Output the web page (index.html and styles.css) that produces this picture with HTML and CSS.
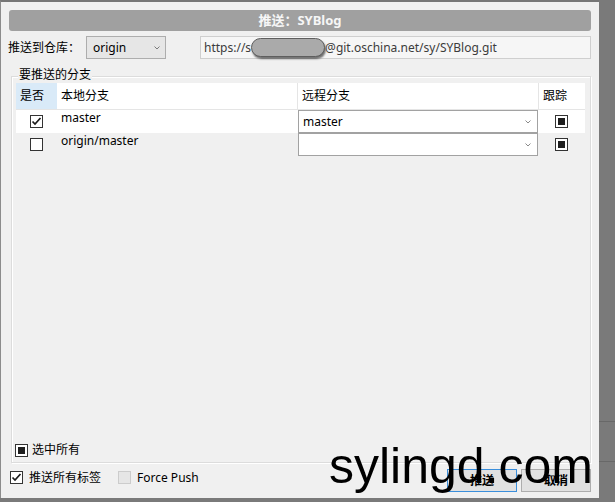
FILE: index.html
```html
<!DOCTYPE html>
<html lang="zh-CN">
<head>
<meta charset="utf-8">
<title>推送：SYBlog</title>
<link rel="stylesheet" href="styles.css">
</head>
<body>
<div class="screen">
  <div class="dialog">
    <div class="titlebar">推送：SYBlog</div>
    <div class="repo-row">
      <span class="label">推送到仓库：</span>
      <div class="combo combo-repo">
        <span class="combo-text">origin</span>
        <svg class="chev" width="6" height="4" viewBox="0 0 6 4"><polyline points="0.5,0.5 3,3 5.5,0.5" fill="none" stroke="#7a7a7a" stroke-width="1"/></svg>
      </div>
      <div class="url-field">
        <span>https://s</span><span class="redact"></span><span>@git.oschina.net/sy/SYBlog.git</span>
      </div>
    </div>
    <div class="group">
      <span class="group-title">要推送的分支</span>
      <div class="table">
        <div class="trow thead">
          <div class="cell c1 sel">是否</div>
          <div class="cell c2">本地分支</div>
          <div class="cell c3 sep">远程分支</div>
          <div class="cell c4 sep">跟踪</div>
        </div>
        <div class="trow body white">
          <div class="cell c1 center"><span class="cb"><svg width="11" height="11" viewBox="0 0 11 11"><polyline points="1.5,5.5 4,8 9.5,2" fill="none" stroke="#1a1a1a" stroke-width="1.7"/></svg></span></div>
          <div class="cell c2 top">master</div>
          <div class="cell c3 combo-cell">
            <div class="combo combo-row"><span class="combo-text">master</span><svg class="chev" width="6" height="4" viewBox="0 0 6 4"><polyline points="0.5,0.5 3,3 5.5,0.5" fill="none" stroke="#8a8a8a" stroke-width="1"/></svg></div>
          </div>
          <div class="cell c4 center"><span class="cb partial"><span class="fill"></span></span></div>
        </div>
        <div class="trow body">
          <div class="cell c1 center"><span class="cb"></span></div>
          <div class="cell c2 top">origin/master</div>
          <div class="cell c3 combo-cell">
            <div class="combo combo-row"><span class="combo-text"></span><svg class="chev" width="6" height="4" viewBox="0 0 6 4"><polyline points="0.5,0.5 3,3 5.5,0.5" fill="none" stroke="#8a8a8a" stroke-width="1"/></svg></div>
          </div>
          <div class="cell c4 center"><span class="cb partial"><span class="fill"></span></span></div>
        </div>
        <div class="tfill"></div>
      </div>
      <div class="select-all"><span class="cb partial"><span class="fill"></span></span><span>选中所有</span></div>
    </div>
    <div class="bottom-row">
      <div class="check-label"><span class="cb"><svg width="11" height="11" viewBox="0 0 11 11"><polyline points="1.5,5.5 4,8 9.5,2" fill="none" stroke="#1a1a1a" stroke-width="1.7"/></svg></span><span>推送所有标签</span></div>
      <div class="check-label force"><span class="cb disabled"></span><span>Force Push</span></div>
      <div class="spacer"></div>
      <button class="btn primary">推送</button>
      <button class="btn">取消</button>
    </div>
  </div>
  <div class="side"></div>
  <div class="watermark">sylingd.com</div>
</div>
</body>
</html>
```
FILE: styles.css
```css
html, body {
  margin: 0;
  padding: 0;
}
body {
  width: 615px;
  height: 502px;
  overflow: hidden;
  background: #7a7a7a;
  font-family: "Noto Sans", "Noto Sans CJK SC", sans-serif;
  font-size: 12px;
  line-height: 16px;
  color: #000;
}
.screen {
  position: relative;
  display: flex;
  width: 615px;
  height: 502px;
}
.dialog {
  width: 599px;
  height: 498px;
  box-sizing: border-box;
  border-top: 2px solid #767676;
  border-left: 1px solid #8c8c8c;
  background: #f0f0f0;
  display: flex;
  flex-direction: column;
}
.side {
  flex: 1;
  background: linear-gradient(to bottom,
    #7a7a7a 0, #7a7a7a 421px,
    #686868 421px, #686868 422px,
    #7a7a7a 422px, #7a7a7a 461px,
    #686868 461px, #686868 462px,
    #7a7a7a 462px);
}
.titlebar {
  margin: 8px 8px 0 8px;
  height: 21px;
  border-radius: 3px;
  background: #a0a0a0;
  color: #f6f6f6;
  font-weight: bold;
  font-size: 13px;
  line-height: 21px;
  text-align: center;
}
.repo-row {
  margin: 5px 8px 0 7px;
  height: 23px;
  display: flex;
  align-items: center;
}
.label {
  width: 78px;
  flex: none;
}
.combo {
  box-sizing: border-box;
  display: flex;
  align-items: center;
  justify-content: space-between;
  height: 23px;
}
.combo-repo {
  width: 80px;
  background: #e6e6e6;
  border: 1px solid #adadad;
  padding: 0 5px 0 6px;
  margin-right: 34px;
}
.chev {
  display: block;
  flex: none;
}
.url-field {
  box-sizing: border-box;
  width: 391px;
  height: 23px;
  border: 1px solid #cfcfcf;
  background: #f6f6f6;
  padding: 0 3px;
  display: flex;
  align-items: center;
  color: #3c3c3c;
  white-space: nowrap;
}
.redact {
  display: inline-block;
  width: 74px;
  height: 19px;
  box-sizing: border-box;
  border-radius: 10px;
  background: #aaaaaa;
  border: 1px solid #5e5e5e;
  box-shadow: 1px 2px 2px rgba(0, 0, 0, 0.55);
  margin: 0 0 1px 0;
}
.group {
  position: relative;
  margin: 17px 8px 0 10px;
  height: 387px;
  box-sizing: border-box;
  border: 1px solid #dcdcdc;
  box-shadow: inset 1px 1px 0 #fff, 1px 1px 0 #fff;
  padding: 6px 5px 2px 4px;
  display: flex;
  flex-direction: column;
}
.group-title {
  position: absolute;
  left: 6px;
  top: -10px;
  padding: 0 1px;
  background: #f0f0f0;
  line-height: 16px;
}
.table {
  flex: 1;
  display: flex;
  flex-direction: column;
}
.trow {
  display: grid;
  grid-template-columns: 41px 240px 241px 46px;
}
.thead {
  height: 27px;
  box-sizing: border-box;
  background: #fff;
  border-bottom: 1px solid #e5e5e5;
}
.thead .cell {
  display: flex;
  align-items: center;
  padding-left: 4px;
}
.thead .sel {
  background: #d9eaf8;
}
.cell {
  box-sizing: border-box;
  min-width: 0;
}
.sep {
  border-left: 1px solid #e5e5e5;
}
.body {
  height: 23px;
}
.white {
  background: #fff;
}
.body .top {
  padding-left: 4px;
  line-height: 16px;
  padding-top: 0;
}
.center {
  display: flex;
  align-items: center;
  justify-content: center;
}
.c1.center {
  justify-content: flex-start;
  padding-left: 14px;
}
.c4.center {
  padding-left: 1px;
}
.combo-cell {
  padding-left: 1px;
}
.combo-row {
  width: 240px;
  background: #fff;
  border: 1px solid #a2a2a2;
  padding: 0 6px 0 4px;
}
.cb {
  box-sizing: border-box;
  width: 13px;
  height: 13px;
  flex: none;
  border: 1px solid #333;
  background: #fff;
  display: flex;
  align-items: center;
  justify-content: center;
}
.cb svg {
  display: block;
}
.cb .fill {
  width: 7px;
  height: 7px;
  background: #1e1e1e;
}
.cb.disabled {
  background: #e6e6e6;
  border-color: #cccccc;
}
.tfill {
  flex: 1;
}
.select-all {
  height: 20px;
  display: flex;
  align-items: center;
  gap: 4px;
  margin-left: -1px;
}
.bottom-row {
  display: flex;
  align-items: flex-start;
  padding: 0 8px 0 9px;
  height: 35px;
}
.check-label {
  margin-top: 5px;
  height: 19px;
  display: flex;
  align-items: center;
  gap: 6px;
}
.force {
  margin-left: 17px;
}
.spacer {
  flex: 1;
}
.btn {
  margin-top: 6px;
  width: 70px;
  height: 23px;
  box-sizing: border-box;
  background: #e1e1e1;
  border: 1px solid #adadad;
  font-family: "Noto Sans", "Noto Sans CJK SC", sans-serif;
  font-size: 12px;
  font-weight: bold;
  line-height: 16px;
  padding: 0;
  color: #000;
}
.btn.primary {
  border-color: #3a8edb;
  margin-right: 4px;
}
.watermark {
  position: absolute;
  left: 329px;
  top: 441px;
  font-family: "Liberation Sans", Arial, sans-serif;
  font-size: 50px;
  line-height: 50px;
  color: #000;
  white-space: nowrap;
}
```
